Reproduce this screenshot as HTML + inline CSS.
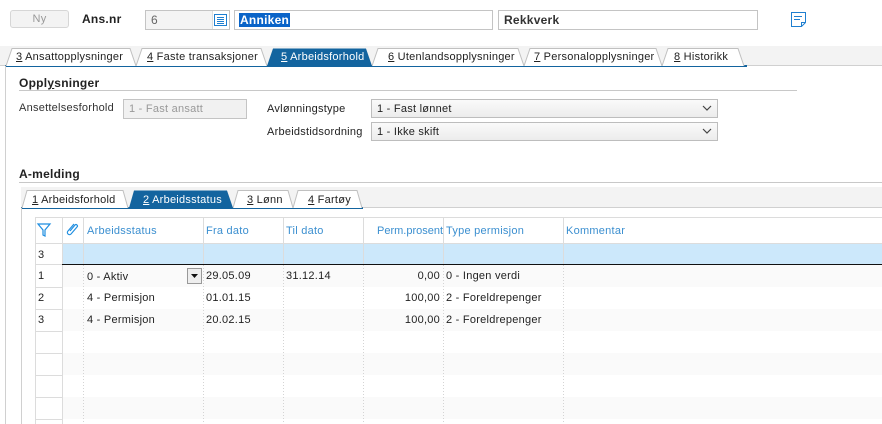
<!DOCTYPE html>
<html><head><meta charset="utf-8"><style>
*{box-sizing:border-box;margin:0;padding:0}
body{width:882px;height:424px;overflow:hidden;background:#fff;font-family:"Liberation Sans",Arial,sans-serif;font-size:11px;letter-spacing:0.25px;color:#222;position:relative}
.a{position:absolute}
.inp{position:absolute;border:1px solid #c4c4c4;background:#fff;height:20px;padding:3px 5px;white-space:nowrap}
.tab{position:absolute;top:51px;height:17px;padding:0 0 0 14px;color:#222;white-space:nowrap}
.u{text-decoration:underline}
.sel{position:absolute;border:1px solid #bdbdbd;background:linear-gradient(#fafafa,#ececec);height:19px;padding:3px 5px}
.chev{position:absolute;right:5px;top:4px}
.hd{position:absolute;color:#3b8fd0;top:225px}
.c{position:absolute;white-space:nowrap}
</style></head><body>
<div class="a" style="left:10px;top:10px;width:59px;height:18px;border:1px solid #d6d6d6;border-radius:3px;background:#f3f3f3;color:#999;text-align:center;padding-top:2px">Ny</div>
<div class="a" style="left:82px;top:12px;font-size:12px;font-weight:bold">Ans.nr</div>
<div class="inp" style="left:145px;top:10px;width:85px;background:#f4f4f4;color:#666;font-size:12px;padding-top:2px">6</div>
<div class="a" style="left:212px;top:11px;width:17px;height:18px;background:#fff;border-left:1px solid #ddd"></div>
<svg class="a" style="left:214px;top:14px" width="13" height="12"><rect x="0.5" y="0.5" width="12" height="11" fill="none" stroke="#1f7fd0"/><path d="M3 3.5h7M3 5.5h7M3 7.5h7M3 9.5h7" stroke="#1f7fd0"/></svg>
<div class="inp" style="left:234px;top:10px;width:259px;padding:2px 4px"><span style="background:#0a64c8;color:#fff;font-weight:bold;font-size:12px;padding:0 1px">Anniken</span></div>
<div class="inp" style="left:498px;top:10px;width:260px;font-weight:bold;font-size:12px;color:#333;padding-top:2px">Rekkverk</div>
<svg class="a" style="left:791px;top:12px" width="16" height="16"><path d="M0.5 0.5h14v10l-4 4h-10z" fill="none" stroke="#1f7fd0"/><path d="M3 4.5h8M3 7.5h6M10.5 14.5v-4h4" fill="none" stroke="#1f7fd0"/></svg>

<div class="a" style="left:0;top:46px;width:882px;height:20px;background:#f3f3f3;border-bottom:1px solid #d0d0d0"></div>
<div class="a" style="left:5px;top:65px;width:742px;height:2px;background:#13649f"></div>
<div class="a" style="left:5px;top:66px;width:1px;height:358px;background:#d0d0d0"></div>
<svg class="a" style="left:0;top:46px" width="760" height="20">
<g fill="#fff" stroke="#c0c0c0">
<path d="M6 20L12 2.5H130L136 20"/><path d="M136 20L142 2.5H261L267 20"/><path d="M372 20L378 2.5H518L524 20"/><path d="M524 20L530 2.5H656L662 20"/><path d="M662 20L668 2.5H738L744 20"/></g>
<path d="M267 20L273 2.5H366L372 20z" fill="#13649f"/>
</svg>
<div class="tab" style="left:2px"><span class="u">3</span> Ansattopplysninger</div>
<div class="tab" style="left:133px"><span class="u">4</span> Faste transaksjoner</div>
<div class="tab" style="left:267px;color:#fff"><span class="u">5</span> Arbeidsforhold</div>
<div class="tab" style="left:374px"><span class="u">6</span> Utenlandsopplysninger</div>
<div class="tab" style="left:520px"><span class="u">7</span> Personalopplysninger</div>
<div class="tab" style="left:660px"><span class="u">8</span> Historikk</div>

<div class="a" style="left:19px;top:76px;font-size:12px;font-weight:bold">Oppl<span class="u">y</span>sninger</div>
<div class="a" style="left:19px;top:90px;width:778px;height:1px;background:#c8c8c8"></div>
<div class="a" style="left:19px;top:102px;color:#333">Ansettelsesforhold</div>
<div class="inp" style="left:123px;top:99px;width:124px;background:#f1f1f1;color:#999">1 - Fast ansatt</div>
<div class="a" style="left:267px;top:103px">Avlønningstype</div>
<div class="sel" style="left:371px;top:99px;width:347px">1 - Fast lønnet<svg class="chev" width="10" height="8"><path d="M1 2l4 4 4-4" fill="none" stroke="#444" stroke-width="1.2"/></svg></div>
<div class="a" style="left:267px;top:126px">Arbeidstidsordning</div>
<div class="sel" style="left:371px;top:122px;width:347px">1 - Ikke skift<svg class="chev" width="10" height="8"><path d="M1 2l4 4 4-4" fill="none" stroke="#444" stroke-width="1.2"/></svg></div>

<div class="a" style="left:19px;top:167px;font-size:12px;font-weight:bold">A-melding</div>
<div class="a" style="left:19px;top:182px;width:863px;height:1px;background:#c8c8c8"></div>
<div class="a" style="left:21px;top:187px;width:861px;height:21px;background:#f3f3f3;border-bottom:1px solid #d0d0d0"></div>
<div class="a" style="left:21px;top:207px;width:342px;height:2px;background:#13649f"></div>
<div class="a" style="left:21px;top:208px;width:1px;height:216px;background:#d0d0d0"></div>
<svg class="a" style="left:0;top:187px" width="380" height="21">
<g fill="#fff" stroke="#c0c0c0"><path d="M22 21L27 3.5H123L128 21"/><path d="M233 21L238 3.5H288L293 21"/><path d="M293 21L298 3.5H357L362 21"/></g>
<path d="M129 21L134 3.5H227L233 21z" fill="#13649f"/></svg>
<div class="c" style="left:32px;top:194px"><span class="u">1</span> Arbeidsforhold</div>
<div class="c" style="left:143px;top:194px;color:#fff"><span class="u">2</span> Arbeidsstatus</div>
<div class="c" style="left:247px;top:194px"><span class="u">3</span> Lønn</div>
<div class="c" style="left:308px;top:194px"><span class="u">4</span> Fartøy</div>

<svg class="a" style="left:0;top:0" width="882" height="424">
<rect x="35" y="217" width="847" height="26" fill="#fff"/>
<rect x="62" y="243" width="820" height="21" fill="#cce8fb"/>
<g fill="#fafafa"><rect x="62" y="265" width="820" height="22"/><rect x="62" y="309" width="820" height="22"/><rect x="62" y="353" width="820" height="22"/><rect x="62" y="397" width="820" height="22"/></g>
<path d="M35 217.5H882M35.5 217V424M62.5 217V424M35 243.5H882M83.5 217V264M203.5 217V264M283.5 217V264M363.5 217V264M443.5 217V264M563.5 217V264" stroke="#dcdcdc"/>
<path d="M35 264.5H62M35 287.5H62M35 309.5H62M35 331.5H62M35 353.5H62M35 375.5H62M35 397.5H62M35 419.5H62" stroke="#dcdcdc"/>
<path d="M62 264.5H882" stroke="#111"/>
<path d="M83.5 265V424M203.5 265V424M283.5 265V424M363.5 265V424M443.5 265V424M563.5 265V424" stroke="#d4d4d4" stroke-dasharray="1,2"/>
<path d="M38 224h12l-5 6v6l-2-1v-5z" fill="none" stroke="#1f8ee0" stroke-width="1.2"/>
<path d="M74 224l-6 7a2 2 0 0 0 3 3l6-7a1.3 1.3 0 0 0-2-2l-5 6" fill="none" stroke="#1f8ee0" stroke-width="1.2"/>
<rect x="187.5" y="268.5" width="14" height="15" fill="#eee" stroke="#999"/><path d="M191 274h7l-3.5 4z" fill="#111"/>
</svg>
<div class="hd" style="left:87px">Arbeidsstatus</div>
<div class="hd" style="left:206px">Fra dato</div>
<div class="hd" style="left:286px">Til dato</div>
<div class="hd" style="left:377px;letter-spacing:0">Perm.prosent</div>
<div class="hd" style="left:446px">Type permisjon</div>
<div class="hd" style="left:566px">Kommentar</div>
<div class="c" style="left:38px;top:249px">3</div>
<div class="c" style="left:38px;top:270px">1</div>
<div class="c" style="left:87px;top:271px">0 - Aktiv</div>
<div class="c" style="left:206px;top:270px">29.05.09</div>
<div class="c" style="left:286px;top:270px">31.12.14</div>
<div class="c" style="left:363px;top:270px;width:77px;text-align:right">0,00</div>
<div class="c" style="left:446px;top:270px">0 - Ingen verdi</div>
<div class="c" style="left:38px;top:292px">2</div>
<div class="c" style="left:87px;top:292px">4 - Permisjon</div>
<div class="c" style="left:206px;top:292px">01.01.15</div>
<div class="c" style="left:363px;top:292px;width:77px;text-align:right">100,00</div>
<div class="c" style="left:446px;top:292px">2 - Foreldrepenger</div>
<div class="c" style="left:38px;top:314px">3</div>
<div class="c" style="left:87px;top:314px">4 - Permisjon</div>
<div class="c" style="left:206px;top:314px">20.02.15</div>
<div class="c" style="left:363px;top:314px;width:77px;text-align:right">100,00</div>
<div class="c" style="left:446px;top:314px">2 - Foreldrepenger</div>
</body></html>
